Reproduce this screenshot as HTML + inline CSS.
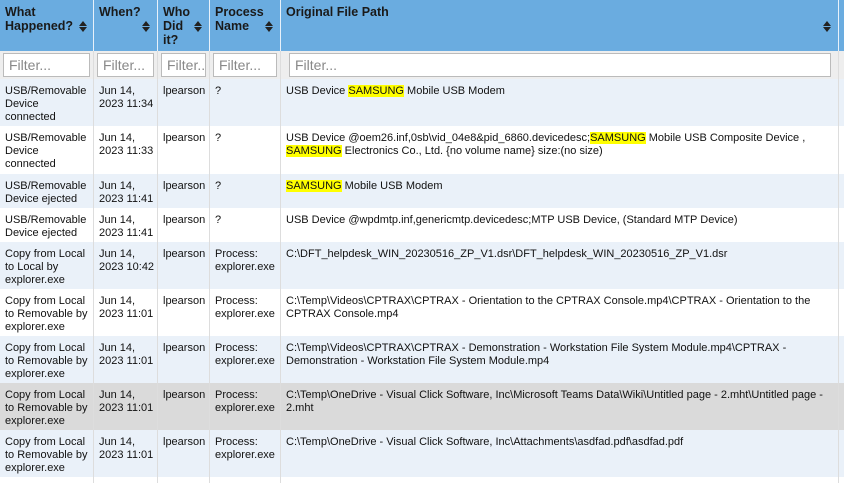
<!DOCTYPE html>
<html><head><style>
*{margin:0;padding:0;box-sizing:border-box}
body{width:844px;height:483px;overflow:hidden;background:#fff;font-family:"Liberation Sans",Arial,sans-serif;position:relative}
.hd{position:absolute;top:0;height:51px;background:#6aace0;color:#1a1a1a;font-weight:bold;font-size:12.5px;line-height:14px;padding:5px 0 0 5px;border-right:1px solid #e8f1fa}
.sort{position:absolute;width:8px;height:12px;top:21px}
.sort:before{content:"";position:absolute;left:0;top:0;border-left:4px solid transparent;border-right:4px solid transparent;border-bottom:5px solid #222}
.sort:after{content:"";position:absolute;left:0;top:6px;border-left:4px solid transparent;border-right:4px solid transparent;border-top:5px solid #222}
.fr{position:absolute;top:51px;height:28px;background:#eee;border-right:1px solid #ddd}
.fi{position:absolute;top:2px;left:3px;right:3px;height:24px;background:#fff;border:1px solid #bbb;font-size:14px;color:#888;padding:3px 0 0 5px;overflow:hidden;white-space:nowrap}
.row{position:absolute;left:0;width:844px}
.c{position:absolute;top:0;bottom:0;border-right:1px solid #ddd;font-size:11px;line-height:13px;color:#111;padding:6px 0 0 5px;white-space:nowrap;overflow:hidden}
.hl{background:#ffff00}
.c1{left:0;width:94px}.c2{left:94px;width:64px}.c3{left:158px;width:52px}.c4{left:210px;width:71px}.c5{left:281px;width:558px}.c6{left:839px;width:5px}
</style></head><body>
<div class="hd" style="left:0;width:94px">What<br>Happened?<div class="sort" style="left:79px"></div></div>
<div class="hd" style="left:94px;width:64px">When?<div class="sort" style="left:48px"></div></div>
<div class="hd" style="left:158px;width:52px">Who<br>Did<br>it?<div class="sort" style="left:36px"></div></div>
<div class="hd" style="left:210px;width:71px">Process<br>Name<div class="sort" style="left:55px"></div></div>
<div class="hd" style="left:281px;width:558px">Original File Path<div class="sort" style="left:542px"></div></div>
<div class="hd" style="left:839px;width:5px;padding:0;border:0"></div>
<div class="fr" style="left:0;width:94px"><div class="fi">Filter...</div></div>
<div class="fr" style="left:94px;width:64px"><div class="fi">Filter...</div></div>
<div class="fr" style="left:158px;width:52px"><div class="fi">Filter...</div></div>
<div class="fr" style="left:210px;width:71px"><div class="fi">Filter...</div></div>
<div class="fr" style="left:281px;width:558px"><div class="fi" style="right:7px;left:8px">Filter...</div></div>
<div class="fr" style="left:839px;width:5px;border:0"></div>

<div class="row" style="top:79px;height:47px;background:#eaf1f9"><div class="c c1">USB/Removable<br>Device<br>connected</div><div class="c c2">Jun 14,<br>2023 11:34</div><div class="c c3">lpearson</div><div class="c c4">?</div><div class="c c5">USB Device <span class="hl">SAMSUNG</span> Mobile USB Modem</div><div class="c c6"></div></div>
<div class="row" style="top:126px;height:48px;background:#fff"><div class="c c1">USB/Removable<br>Device<br>connected</div><div class="c c2">Jun 14,<br>2023 11:33</div><div class="c c3">lpearson</div><div class="c c4">?</div><div class="c c5">USB Device @oem26.inf,0sb\vid_04e8&amp;pid_6860.devicedesc;<span class="hl">SAMSUNG</span> Mobile USB Composite Device ,<br><span class="hl">SAMSUNG</span> Electronics Co., Ltd. {no volume name} size:(no size)</div><div class="c c6"></div></div>
<div class="row" style="top:174px;height:34px;background:#eaf1f9"><div class="c c1">USB/Removable<br>Device ejected</div><div class="c c2">Jun 14,<br>2023 11:41</div><div class="c c3">lpearson</div><div class="c c4">?</div><div class="c c5"><span class="hl">SAMSUNG</span> Mobile USB Modem</div><div class="c c6"></div></div>
<div class="row" style="top:208px;height:34px;background:#fff"><div class="c c1">USB/Removable<br>Device ejected</div><div class="c c2">Jun 14,<br>2023 11:41</div><div class="c c3">lpearson</div><div class="c c4">?</div><div class="c c5">USB Device @wpdmtp.inf,genericmtp.devicedesc;MTP USB Device, (Standard MTP Device)</div><div class="c c6"></div></div>
<div class="row" style="top:242px;height:47px;background:#eaf1f9"><div class="c c1">Copy from Local<br>to Local by<br>explorer.exe</div><div class="c c2">Jun 14,<br>2023 10:42</div><div class="c c3">lpearson</div><div class="c c4">Process:<br>explorer.exe</div><div class="c c5">C:\DFT_helpdesk_WIN_20230516_ZP_V1.dsr\DFT_helpdesk_WIN_20230516_ZP_V1.dsr</div><div class="c c6"></div></div>
<div class="row" style="top:289px;height:47px;background:#fff"><div class="c c1">Copy from Local<br>to Removable by<br>explorer.exe</div><div class="c c2">Jun 14,<br>2023 11:01</div><div class="c c3">lpearson</div><div class="c c4">Process:<br>explorer.exe</div><div class="c c5">C:\Temp\Videos\CPTRAX\CPTRAX - Orientation to the CPTRAX Console.mp4\CPTRAX - Orientation to the<br>CPTRAX Console.mp4</div><div class="c c6"></div></div>
<div class="row" style="top:336px;height:47px;background:#eaf1f9"><div class="c c1">Copy from Local<br>to Removable by<br>explorer.exe</div><div class="c c2">Jun 14,<br>2023 11:01</div><div class="c c3">lpearson</div><div class="c c4">Process:<br>explorer.exe</div><div class="c c5">C:\Temp\Videos\CPTRAX\CPTRAX - Demonstration - Workstation File System Module.mp4\CPTRAX -<br>Demonstration - Workstation File System Module.mp4</div><div class="c c6"></div></div>
<div class="row" style="top:383px;height:47px;background:#dadada"><div class="c c1">Copy from Local<br>to Removable by<br>explorer.exe</div><div class="c c2">Jun 14,<br>2023 11:01</div><div class="c c3">lpearson</div><div class="c c4">Process:<br>explorer.exe</div><div class="c c5">C:\Temp\OneDrive - Visual Click Software, Inc\Microsoft Teams Data\Wiki\Untitled page - 2.mht\Untitled page -<br>2.mht</div><div class="c c6"></div></div>
<div class="row" style="top:430px;height:47px;background:#eaf1f9"><div class="c c1">Copy from Local<br>to Removable by<br>explorer.exe</div><div class="c c2">Jun 14,<br>2023 11:01</div><div class="c c3">lpearson</div><div class="c c4">Process:<br>explorer.exe</div><div class="c c5">C:\Temp\OneDrive - Visual Click Software, Inc\Attachments\asdfad.pdf\asdfad.pdf</div><div class="c c6"></div></div>
<div class="row" style="top:477px;height:6px;background:#fff"><div class="c c1"></div><div class="c c2"></div><div class="c c3"></div><div class="c c4"></div><div class="c c5"></div></div>
</body></html>
